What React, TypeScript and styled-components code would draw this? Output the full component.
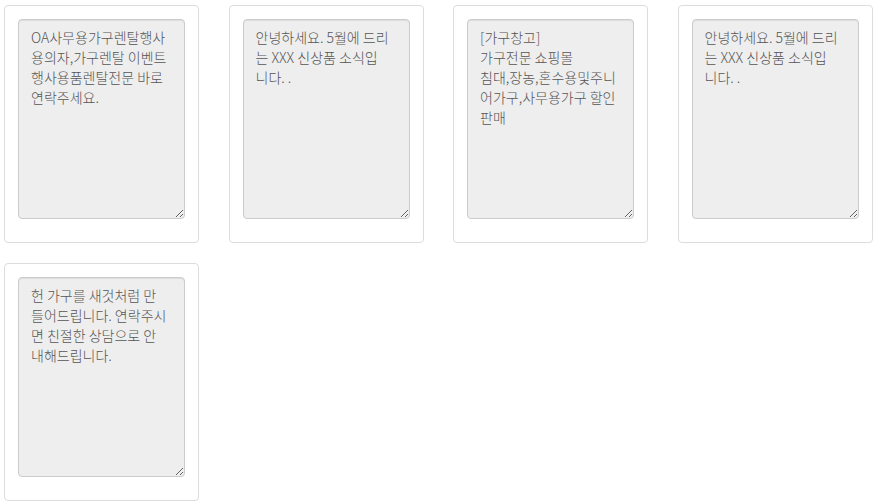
import React from 'react';
import styled, { createGlobalStyle } from 'styled-components';

const GlobalStyle = createGlobalStyle`
  html, body {
    margin: 0;
    padding: 0;
    background: #fff;
  }
  body {
    font-family: "Noto Sans CJK KR", "Noto Sans", sans-serif;
  }
`;

const Board = styled.div`
  display: grid;
  grid-template-columns: repeat(4, 195px);
  column-gap: 29.5px;
  row-gap: 20px;
  padding: 5px 0 0 4px;
`;

const Card = styled.div`
  box-sizing: border-box;
  width: 195px;
  height: 238px;
  padding: 13px 13px 23px 13px;
  border: 1px solid #ddd;
  border-radius: 4px;
  background: #fff;
`;

const Memo = styled.textarea`
  box-sizing: border-box;
  display: block;
  width: 167px;
  height: 200px;
  margin: 0;
  padding: 7px 10px 7px 12px;
  border: 1px solid #ccc;
  border-radius: 4px;
  background: #eee;
  color: #555;
  font-family: "Noto Sans CJK KR", "Noto Sans", sans-serif;
  font-size: 14px;
  font-weight: 300;
  line-height: 20px;
  white-space: pre-wrap;
  box-shadow: inset 0 1px 1px rgba(0, 0, 0, 0.075);
  outline: none;
  overflow: hidden;
`;

// line breaks follow the wrapping seen in the original screen
const notes = [
  'OA사무용가구렌탈행사\n용의자,가구렌탈 이벤트\n행사용품렌탈전문 바로\n연락주세요.',
  '안녕하세요. 5월에 드리\n는 XXX 신상품 소식입\n니다. .',
  '[가구창고]\n가구전문 쇼핑몰\n침대,장농,혼수용및주니\n어가구,사무용가구 할인\n판매',
  '안녕하세요. 5월에 드리\n는 XXX 신상품 소식입\n니다. .',
  '헌 가구를 새것처럼 만\n들어드립니다. 연락주시\n면 친절한 상담으로 안\n내해드립니다.',
];

export default function App() {
  return (
    <>
      <GlobalStyle />
      <Board>
        {notes.map((text, i) => (
          <Card key={i}>
            <Memo readOnly defaultValue={text} />
          </Card>
        ))}
      </Board>
    </>
  );
}
